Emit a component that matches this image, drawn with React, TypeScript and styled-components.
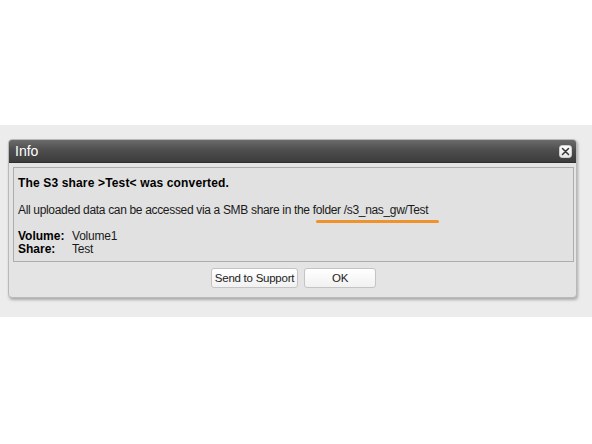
import React from 'react';
import styled, { createGlobalStyle } from 'styled-components';

const GlobalStyle = createGlobalStyle`
  html, body {
    margin: 0;
    padding: 0;
    background: #ffffff;
  }
  body {
    font-family: 'Liberation Sans', Arial, sans-serif;
    font-size: 12px;
    color: #111;
  }
`;

interface DetailRow {
  label: string;
  value: string;
}

const details: DetailRow[] = [
  { label: 'Volume:', value: 'Volume1' },
  { label: 'Share:', value: 'Test' },
];

function CloseIcon() {
  return (
    <svg width="9" height="9" viewBox="0 0 9 9">
      <path
        d="M1.5 1.5 L7.5 7.5 M7.5 1.5 L1.5 7.5"
        stroke="#3a3a3a"
        strokeWidth="1.6"
        strokeLinecap="round"
      />
    </svg>
  );
}

function InfoDialog() {
  return (
    <Dialog>
      <TitleBar>
        <Title>Info</Title>
        <CloseButton aria-label="Close">
          <CloseIcon />
        </CloseButton>
      </TitleBar>

      <DialogBody>
        <MessagePanel>
          <Heading>The S3 share &gt;Test&lt; was converted.</Heading>
          <Paragraph>
            All uploaded data can be accessed via a SMB share in the{' '}
            <Highlight>folder /s3_nas_gw/Test</Highlight>
          </Paragraph>

          <DetailsGrid>
            {details.map((row) => (
              <React.Fragment key={row.label}>
                <DetailLabel>{row.label}</DetailLabel>
                <DetailValue>{row.value}</DetailValue>
              </React.Fragment>
            ))}
          </DetailsGrid>
        </MessagePanel>

        <ButtonRow>
          <DialogButton $width={87}>Send to Support</DialogButton>
          <DialogButton $width={72}>OK</DialogButton>
        </ButtonRow>
      </DialogBody>
    </Dialog>
  );
}

export default function App() {
  return (
    <Page>
      <GlobalStyle />
      <Backdrop>
        <InfoDialog />
      </Backdrop>
    </Page>
  );
}

const Page = styled.div`
  width: 592px;
  height: 444px;
  padding-top: 125px;
  box-sizing: border-box;
  background: #ffffff;
`;

const Backdrop = styled.div`
  background: #ececec;
  height: 192px;
  padding: 14px 15px 0 8px;
  box-sizing: border-box;
`;

const Dialog = styled.div`
  width: 569px;
  height: 159px;
  box-sizing: border-box;
  background: #e4e4e4;
  border: 1px solid #b9b9b9;
  border-radius: 4px;
  box-shadow: 1px 2px 3px rgba(0, 0, 0, 0.28);
  overflow: hidden;
  display: flex;
  flex-direction: column;
`;

const TitleBar = styled.div`
  height: 22px;
  display: flex;
  align-items: center;
  justify-content: space-between;
  padding: 0 4px 0 6px;
  background: linear-gradient(#6b6b6b, #4e4e4e 45%, #3c3c3c);
  border-bottom: 1px solid #2f2f2f;
`;

const Title = styled.span`
  color: #ffffff;
  font-size: 14px;
  line-height: 22px;
`;

const CloseButton = styled.div`
  width: 13px;
  height: 13px;
  box-sizing: border-box;
  border-radius: 3px;
  border: 1px solid #cfcfcf;
  background: linear-gradient(#ffffff, #e6e6e6);
  display: flex;
  align-items: center;
  justify-content: center;
`;

const DialogBody = styled.div`
  flex: 1;
  padding: 4px 2px 0 4px;
  display: flex;
  flex-direction: column;
`;

const MessagePanel = styled.div`
  border: 1px solid #adadad;
  background: #e1e1e1;
  padding: 8px 4px 5px;
  height: 95px;
  box-sizing: border-box;
`;

const Heading = styled.div`
  font-weight: bold;
  letter-spacing: 0.15px;
  line-height: 15px;
  color: #000;
`;

const Paragraph = styled.div`
  margin-top: 12px;
  line-height: 15px;
  letter-spacing: -0.33px;
  color: #1a1a1a;
`;

const Highlight = styled.span`
  position: relative;

  &::after {
    content: '';
    position: absolute;
    left: 3px;
    right: -11px;
    bottom: -6px;
    height: 3px;
    border-radius: 2px;
    background: #f0922c;
  }
`;

const DetailsGrid = styled.div`
  margin-top: 12px;
  display: grid;
  grid-template-columns: 54px auto;
  line-height: 13px;
`;

const DetailLabel = styled.span`
  font-weight: bold;
  color: #000;
`;

const DetailValue = styled.span`
  letter-spacing: -0.2px;
  color: #1a1a1a;
`;

const ButtonRow = styled.div`
  display: flex;
  justify-content: center;
  gap: 6px;
  margin-top: 6px;
`;

const DialogButton = styled.div<{ $width: number }>`
  width: ${(p) => p.$width}px;
  height: 20px;
  box-sizing: border-box;
  border: 1px solid #c4c4c4;
  border-radius: 3px;
  background: linear-gradient(#ffffff, #f1f1f1);
  font-size: 11.5px;
  letter-spacing: -0.25px;
  line-height: 18px;
  text-align: center;
  color: #222;
`;
